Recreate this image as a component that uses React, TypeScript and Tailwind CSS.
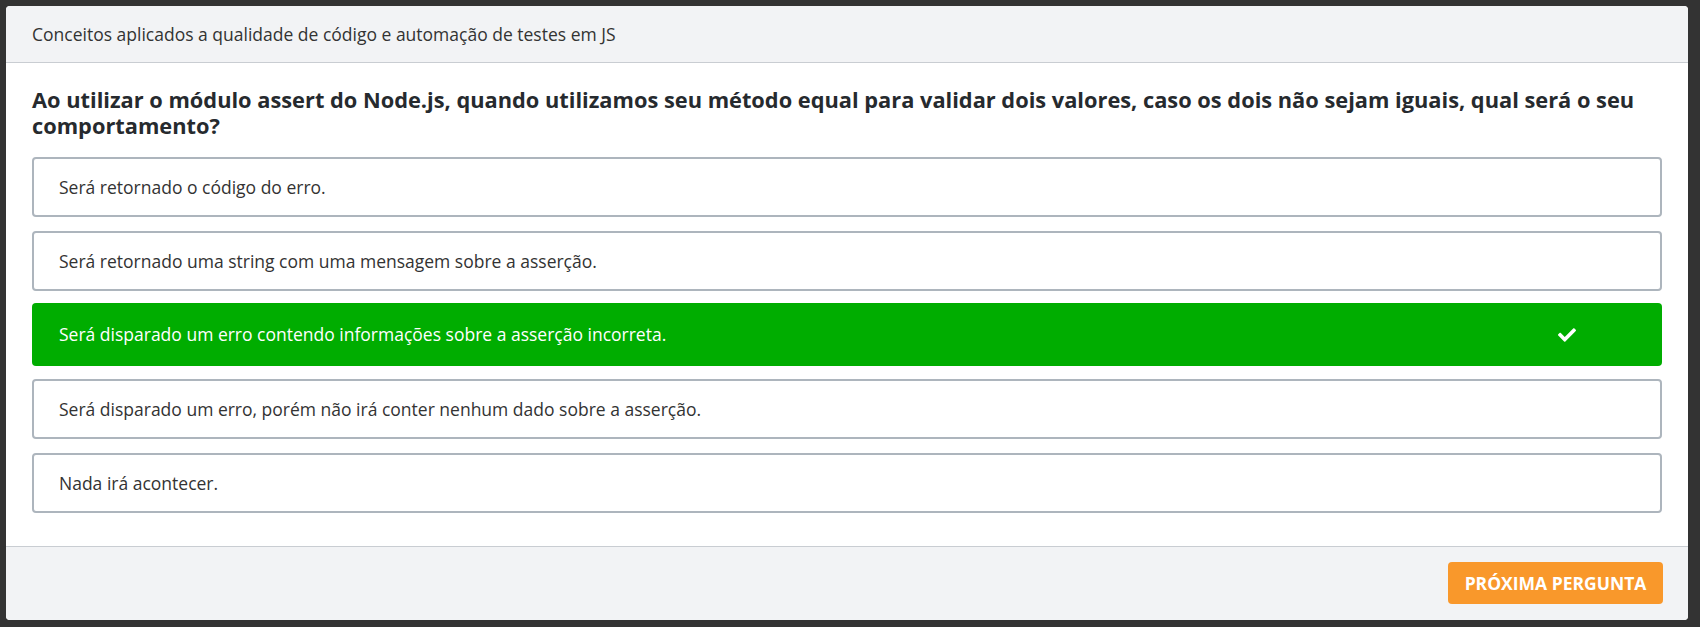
import React from "react";
import { FaCheck } from "react-icons/fa";

const options = [
  { text: "Será retornado o código do erro.", correct: false },
  { text: "Será retornado uma string com uma mensagem sobre a asserção.", correct: false },
  { text: "Será disparado um erro contendo informações sobre a asserção incorreta.", correct: true },
  { text: "Será disparado um erro, porém não irá conter nenhum dado sobre a asserção.", correct: false },
  { text: "Nada irá acontecer.", correct: false },
];

export default function App() {
  return (
    <div
      className="w-[1700px] h-[627px] bg-[#333333] pt-[6px] pl-[6px] pr-[12px] pb-[7px]"
      style={{ fontFamily: '"Open Sans", "Noto Sans", sans-serif' }}
    >
      <div className="h-full bg-white rounded-[4px] flex flex-col overflow-hidden">
        <div className="h-[57px] shrink-0 bg-[#f2f3f5] border-b border-[#c9cdd2] flex items-center px-[26px] text-[17.5px] text-[#333333]">
          Conceitos aplicados a qualidade de código e automação de testes em JS
        </div>
        <div className="flex-1 px-[26px] pt-[24px]">
          <h1 className="text-[21.8px] leading-[26px] font-bold text-[#262a2e] mb-[18px]">
            Ao utilizar o módulo assert do Node.js, quando utilizamos seu método equal para validar dois valores, caso os dois não sejam iguais, qual será o seu comportamento?
          </h1>
          <div className="flex flex-col gap-[14px]">
            {options.map((o) =>
              o.correct ? (
                <div
                  key={o.text}
                  className="h-[63px] -mt-[2px] -mb-[1px] rounded-[4px] bg-[#00ad00] flex items-center justify-between pl-[27px] pr-[86px] text-white text-[17.5px]"
                >
                  <span>{o.text}</span>
                  <FaCheck className="w-[18px] h-[18px]" />
                </div>
              ) : (
                <div
                  key={o.text}
                  className="h-[60px] rounded-[4px] border-2 border-[#adb5bd] flex items-center pl-[25px] text-[17.5px] text-[#333333]"
                >
                  {o.text}
                </div>
              )
            )}
          </div>
        </div>
        <div className="h-[74px] shrink-0 bg-[#f2f3f5] border-t border-[#c9cdd2] flex items-start justify-end pt-[15px] pr-[25px]">
          <button className="h-[42px] w-[215px] rounded-[4px] bg-[#f9982b] text-white font-bold text-[17.5px] uppercase">
            Próxima pergunta
          </button>
        </div>
      </div>
    </div>
  );
}
